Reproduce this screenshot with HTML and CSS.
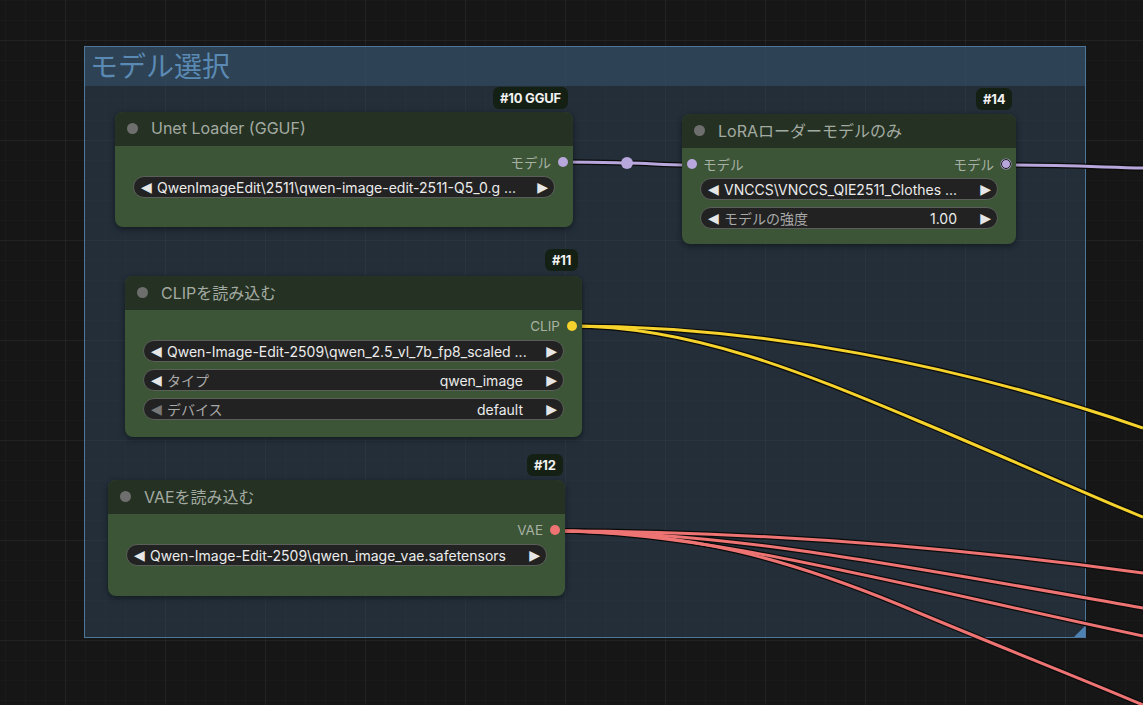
FILE: index.html
```html
<!DOCTYPE html>
<html lang="ja">
<head>
<meta charset="utf-8">
<title>モデル選択</title>
<link rel="stylesheet" href="styles.css">
</head>
<body>
<div class="canvas">
  <div class="group">
    <div class="group-title">モデル選択</div>
    <div class="group-body"></div>
    <div class="group-resize"></div>
  </div>

  <svg class="links" width="1143" height="705" viewBox="0 0 1143 705">
    <g class="outline">
      <path d="M562,162 C600,162 620,163 627,163 C650,163 660,165 690,165"/>
      <path d="M1005,165 C1060,165 1100,167 1143,168"/>
      <path d="M571,326 C760,326 960,365 1143,428"/>
      <path d="M571,326 C700,326 820,380 940,430 C1030,468 1100,500 1143,517"/>
      <path d="M554,531 C760,531 960,548 1143,573"/>
      <path d="M554,531 C720,531 900,565 1143,608"/>
      <path d="M554,531 C700,531 880,580 1143,636"/>
      <path d="M554,531 C690,531 790,560 900,605 C990,643 1080,678 1143,705"/>
    </g>
    <g class="lav">
      <path d="M562,162 C600,162 620,163 627,163 C650,163 660,165 690,165"/>
      <path d="M1005,165 C1060,165 1100,167 1143,168"/>
    </g>
    <g class="yel">
      <path d="M571,326 C760,326 960,365 1143,428"/>
      <path d="M571,326 C700,326 820,380 940,430 C1030,468 1100,500 1143,517"/>
    </g>
    <g class="red">
      <path d="M554,531 C760,531 960,548 1143,573"/>
      <path d="M554,531 C720,531 900,565 1143,608"/>
      <path d="M554,531 C700,531 880,580 1143,636"/>
      <path d="M554,531 C690,531 790,560 900,605 C990,643 1080,678 1143,705"/>
    </g>
    <circle class="reroute" cx="627" cy="163" r="6"/>
  </svg>

  <!-- #10 -->
  <div class="badge b10">#10 GGUF</div>
  <div class="node n10">
    <div class="node-title"><span class="dot"></span><span>Unet Loader (GGUF)</span></div>
    <div class="node-body">
      <div class="slots">
        <span class="slot-in"></span>
        <span class="slot-out">モデル<span class="pin lav-pin"></span></span>
      </div>
      <div class="widget">
        <span class="arrow">◀</span>
        <span class="wtext">QwenImageEdit\2511\qwen-image-edit-2511-Q5_0.g ...</span>
        <span class="arrow">▶</span>
      </div>
    </div>
  </div>

  <!-- #14 -->
  <div class="badge b14">#14</div>
  <div class="node n14">
    <div class="node-title"><span class="dot"></span><span>LoRAローダーモデルのみ</span></div>
    <div class="node-body">
      <div class="slots">
        <span class="slot-in"><span class="pin lav-pin"></span>モデル</span>
        <span class="slot-out">モデル<span class="pin lav-pin hollow"></span></span>
      </div>
      <div class="widget">
        <span class="arrow">◀</span>
        <span class="wtext">VNCCS\VNCCS_QIE2511_Clothes ...</span>
        <span class="arrow">▶</span>
      </div>
      <div class="widget">
        <span class="arrow">◀</span>
        <span class="wlabel">モデルの強度</span>
        <span class="wvalue">1.00</span>
        <span class="arrow">▶</span>
      </div>
    </div>
  </div>

  <!-- #11 -->
  <div class="badge b11">#11</div>
  <div class="node n11">
    <div class="node-title"><span class="dot"></span><span>CLIPを読み込む</span></div>
    <div class="node-body">
      <div class="slots">
        <span class="slot-in"></span>
        <span class="slot-out">CLIP<span class="pin yel-pin"></span></span>
      </div>
      <div class="widget">
        <span class="arrow">◀</span>
        <span class="wtext">Qwen-Image-Edit-2509\qwen_2.5_vl_7b_fp8_scaled ...</span>
        <span class="arrow">▶</span>
      </div>
      <div class="widget">
        <span class="arrow">◀</span>
        <span class="wlabel">タイプ</span>
        <span class="wvalue">qwen_image</span>
        <span class="arrow">▶</span>
      </div>
      <div class="widget">
        <span class="arrow dim">◀</span>
        <span class="wlabel">デバイス</span>
        <span class="wvalue">default</span>
        <span class="arrow">▶</span>
      </div>
    </div>
  </div>

  <!-- #12 -->
  <div class="badge b12">#12</div>
  <div class="node n12">
    <div class="node-title"><span class="dot"></span><span>VAEを読み込む</span></div>
    <div class="node-body">
      <div class="slots">
        <span class="slot-in"></span>
        <span class="slot-out">VAE<span class="pin red-pin"></span></span>
      </div>
      <div class="widget">
        <span class="arrow">◀</span>
        <span class="wtext">Qwen-Image-Edit-2509\qwen_image_vae.safetensors</span>
        <span class="arrow">▶</span>
      </div>
    </div>
  </div>
</div>
</body>
</html>
```

FILE: styles.css
```css
* { box-sizing: border-box; }
html, body {
  margin: 0;
  padding: 0;
  width: 1143px;
  height: 705px;
  overflow: hidden;
  background: #161616;
  font-family: Inter, "Noto Sans CJK JP", sans-serif;
}
.canvas {
  position: relative;
  width: 1143px;
  height: 705px;
  background-color: #161616;
  background-image:
    linear-gradient(to right, rgba(255,255,255,0.035) 1px, transparent 1px),
    linear-gradient(to bottom, rgba(255,255,255,0.035) 1px, transparent 1px),
    linear-gradient(to right, rgba(255,255,255,0.015) 1px, transparent 1px),
    linear-gradient(to bottom, rgba(255,255,255,0.015) 1px, transparent 1px);
  background-size: 100px 100px, 100px 100px, 20px 20px, 20px 20px;
  background-position: 65px 40px, 65px 40px, 5px 0px, 5px 0px;
  overflow: hidden;
}

/* group */
.group {
  position: absolute;
  left: 84px;
  top: 46px;
  width: 1002px;
  height: 592px;
  border: 1px solid #4d769c;
  display: flex;
  flex-direction: column;
  background: rgba(50, 76, 100, 0.45);
}
.group-title {
  height: 39px;
  flex: none;
  background: rgba(56, 86, 112, 0.5);
  color: #5a89b3;
  font-size: 28px;
  line-height: 36px;
  padding-left: 5px;
  font-family: "Noto Sans CJK JP", Inter, sans-serif;
  font-weight: 400;
}
.group-body { flex: 1; }
.group-resize {
  position: absolute;
  right: 0;
  bottom: 0;
  width: 0;
  height: 0;
  border-left: 11px solid transparent;
  border-bottom: 11px solid #4d82b3;
}

/* links */
.links {
  position: absolute;
  left: 0;
  top: 0;
}
.links path { fill: none; }
.outline path { stroke: #0b0b0b; stroke-width: 5.5; }
.lav path { stroke: #b8a7dc; stroke-width: 3; }
.yel path { stroke: #f5d22c; stroke-width: 3; }
.red path { stroke: #ee7474; stroke-width: 3; }
.reroute { fill: #b8a7dc; }

/* badges */
.badge {
  position: absolute;
  height: 22px;
  padding: 0 7px;
  border-radius: 6px;
  background: #152015;
  color: #f2f2f2;
  font-size: 13px;
  font-weight: 700;
  line-height: 22px;
  letter-spacing: -0.2px;
}
.b10 { left: 493px; top: 87px; }
.b14 { left: 976px; top: 88px; }
.b11 { left: 545px; top: 249px; }
.b12 { left: 527px; top: 454px; }

/* nodes */
.node {
  position: absolute;
  border-radius: 8px;
  background: #3b5536;
  box-shadow: 0 2px 6px rgba(0,0,0,0.45);
  overflow: visible;
  display: flex;
  flex-direction: column;
}
.n10 { left: 115px; top: 112px; width: 458px; height: 115px; }
.n14 { left: 682px; top: 114px; width: 334px; height: 130px; }
.n11 { left: 125px; top: 276px; width: 457px; height: 161px; }
.n12 { left: 108px; top: 480px; width: 457px; height: 116px; }

.node-title {
  height: 34px;
  flex: none;
  background: #253223;
  border-radius: 8px 8px 0 0;
  display: flex;
  align-items: center;
  padding-left: 12px;
  gap: 13px;
  color: #a3aaa2;
  font-size: 16px;
  padding-bottom: 2px;
}
.dot {
  width: 11px;
  height: 11px;
  border-radius: 50%;
  background: #6e6e6e;
  flex: none;
}
.node-body {
  display: flex;
  flex-direction: column;
  padding: 6px 18px 0 18px;
  gap: 7px;
}
.slots {
  height: 20px;
  display: flex;
  justify-content: space-between;
  align-items: center;
  margin: 0 -13px 0 -13px;
  color: #a8b0a4;
  font-size: 13.5px;
  margin-bottom: -3px;
}
.slot-in, .slot-out {
  display: flex;
  align-items: center;
  gap: 6px;
}
.slot-out { gap: 7px; }
.pin {
  width: 10px;
  height: 10px;
  border-radius: 50%;
  flex: none;
}
.lav-pin { background: #b8a7dc; }
.yel-pin { background: #f5d22c; }
.red-pin { background: #ee7474; }
.hollow { border: 1.5px solid #1b1b1b; box-shadow: 0 0 0 0.5px #b8a7dc; }

.widget {
  height: 22px;
  border-radius: 11px;
  background: #222222;
  border: 1px solid #5a5f59;
  display: flex;
  align-items: center;
  padding: 0 6px 0 7px;
  color: #ececec;
  font-size: 14px;
  white-space: nowrap;
}
.arrow {
  font-size: 14px;
  color: #e6e6e6;
  flex: none;
  width: 16px;
  font-family: "DejaVu Sans", sans-serif;
}
.arrow.dim { color: #777; }
.wtext {
  flex: 1;
  overflow: hidden;
  padding-left: 0;
}
.wlabel {
  flex: 1;
  color: #a8a8a8;
}
.wvalue {
  padding-right: 14px;
}
.widget .arrow:last-child { text-align: right; width: 20px; }
```
